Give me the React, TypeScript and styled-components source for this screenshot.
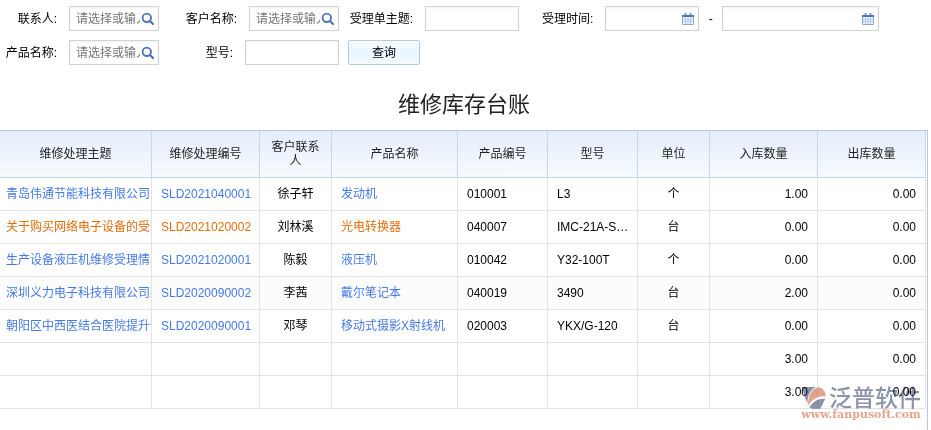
import React, { useId } from "react";
import styled, { createGlobalStyle } from "styled-components";

const GlobalStyle = createGlobalStyle`
  *, *::before, *::after { box-sizing: border-box; }
  body {
    margin: 0;
    background: #fff;
    color: #000;
    font: 12px/14px "Liberation Sans", "Noto Sans CJK SC", sans-serif;
  }
  input, button { font: inherit; color: inherit; }
`;

const Page = styled.main`
  position: relative;
  display: flex;
  flex-direction: column;
  min-height: 100vh;
  padding-right: 3px;
`;

const Filters = styled.form`
  display: grid;
  grid-template-columns: 159px 180px 180px 1fr;
  row-gap: 9px;
  padding: 6px 49px 0 0;
`;

const Field = styled.div<{ $start?: boolean }>`
  display: flex;
  align-items: center;
  justify-content: ${(p) => (p.$start ? "flex-start" : "flex-end")};
  padding-left: ${(p) => (p.$start ? 23 : 0)}px;
`;

const Label = styled.label`
  margin-right: 12px;
  white-space: nowrap;
`;

const Control = styled.div<{ $width?: number }>`
  position: relative;
  height: 25px;
  ${(p) => (p.$width ? `flex: none; width: ${p.$width}px;` : "flex: 1; min-width: 94px;")}
`;

const TextInput = styled.input<{ $icon?: boolean }>`
  display: block;
  width: 100%;
  height: 25px;
  padding: 0 ${(p) => (p.$icon ? 18 : 6)}px 0 6px;
  border: 1px solid #d2d2d2;
  border-radius: 0;
  background: #fff;
  box-shadow: inset 0 1px 3px rgba(0, 0, 0, 0.06);
  outline-color: #86aee0;
  text-overflow: clip;
  &::placeholder { color: #757575; opacity: 1; text-overflow: clip; }
`;

const IconButton = styled.button`
  position: absolute;
  top: 5px;
  right: 3px;
  display: flex;
  align-items: center;
  justify-content: center;
  width: 16px;
  height: 16px;
  padding: 0;
  border: 0;
  background: none;
  cursor: pointer;
`;

const Dash = styled.span`
  width: 23px;
  text-align: center;
`;

const QueryButton = styled.button`
  width: 72px;
  height: 25px;
  margin-left: 9px;
  padding: 0;
  border: 1px solid #b9c9e0;
  border-radius: 2px;
  background: linear-gradient(#f8fcff, #e8f4fe 55%, #f5faff);
  cursor: pointer;
`;

const Title = styled.h1`
  margin: 0;
  padding-top: 15px;
  color: #222;
  font-size: 22px;
  font-weight: 400;
  line-height: 50px;
  text-align: center;
`;

const GridPanel = styled.section`
  flex: 1;
  padding-right: 1px;
  border-top: 1px solid #b8c6e0;
  border-right: 1px solid #bcc6df;
`;

const Table = styled.table`
  width: 100%;
  table-layout: fixed;
  border-collapse: separate;
  border-spacing: 0;
`;

const HeadRow = styled.tr`
  background: linear-gradient(#e4edfb, #f8fbff);
`;

const HeadCell = styled.th`
  height: 47px;
  padding: 0 9px;
  border-right: 1px solid #c5d8eb;
  border-bottom: 1px solid #c0d7ea;
  color: #222;
  font-weight: 400;
`;

const BodyRow = styled.tr<{ $shaded?: boolean }>`
  background: ${(p) => (p.$shaded ? "#fcfcfc" : "#fff")};
`;

type Align = "left" | "center" | "right";

const cellPadding = (align: Align, clip?: boolean) => {
  if (clip) return "0 0 0 6px";
  return align === "left" ? "0 7px 0 9px" : "0 9px";
};

const Cell = styled.td<{ $align?: Align; $clip?: boolean }>`
  height: 33px;
  padding: ${(p) => cellPadding(p.$align ?? "left", p.$clip)};
  border-right: 1px solid #e3e3e3;
  border-bottom: 1px solid #e3e3e3;
  overflow: hidden;
  white-space: nowrap;
  text-overflow: ${(p) => (p.$clip ? "clip" : "ellipsis")};
  text-align: ${(p) => p.$align ?? "left"};
`;

const Link = styled.a<{ $active?: boolean }>`
  color: ${(p) => (p.$active ? "#e36c09" : "#4579e6")};
  text-decoration: none;
`;

const Watermark = styled.div`
  position: absolute;
  right: 10px;
  bottom: 10px;
  width: 120px;
  mix-blend-mode: multiply;
  pointer-events: none;
`;

const Brand = styled.div`
  display: flex;
  align-items: center;
  height: 24px;
  color: #8b93ac;
  font-size: 23px;
  font-weight: 500;
  line-height: 24px;
  white-space: nowrap;
`;

const Site = styled.div`
  color: #e2a58c;
  font: bold 11px/10px "DejaVu Serif", serif;
  text-align: center;
  white-space: nowrap;
`;

const SearchIcon = () => (
  <svg width="14" height="14" viewBox="0 0 14 14" fill="none" stroke="#4f74b8" aria-hidden="true">
    <circle cx="5.8" cy="5.8" r="4.2" strokeWidth="1.9" />
    <path d="M9 9 12 12" strokeWidth="2.3" strokeLinecap="round" />
  </svg>
);

const CalendarIcon = () => (
  <svg width="12" height="12" viewBox="0 0 12 12" aria-hidden="true">
    <path d="M1 4h10v7H1z" fill="#f3f8ff" />
    <path d="M3.5 4v7M6 4v7M8.5 4v7M1 6.3h10M1 8.6h10" stroke="#a9bfe6" strokeWidth="0.8" />
    <path d="M.5 3v8.5h11V3" fill="none" stroke="#8aa6d6" />
    <path d="M0 2h12v2H0z" fill="#4d76b8" />
    <path d="M2.5 0h2v2h-2zM7.5 0h2v2h-2z" fill="#7c9bd0" />
  </svg>
);

const BrandLogo = () => (
  <svg width="28" height="24" viewBox="0 0 80 72" preserveAspectRatio="xMinYMid meet" aria-hidden="true">
    <path d="M2 3H44C28 12 20 28 19 52C12 40 10 24 2 3Z" fill="#8b93ac" />
    <path d="M20 60C22 26 34 5 54 4C68 7 74 20 74 32C54 27 36 38 20 60Z" fill="#e2a58c" />
    <path d="M25 64C36 46 50 37 73 38C68 46 64 58 58 68H34Z" fill="#8b93ac" />
  </svg>
);

type InputFieldProps = { label: string; width: number; lookup?: boolean };

const InputField = ({ label, width, lookup }: InputFieldProps) => {
  const id = useId();
  return (
    <Field>
      <Label htmlFor={id}>{label}:</Label>
      <Control $width={width}>
        <TextInput id={id} type="text" $icon={lookup} placeholder={lookup ? "请选择或输入" : undefined} />
        {lookup && (
          <IconButton type="button" aria-label={`选择${label}`}>
            <SearchIcon />
          </IconButton>
        )}
      </Control>
    </Field>
  );
};

const DateInput = ({ id, name, width }: { id: string; name: string; width?: number }) => (
  <Control $width={width}>
    <TextInput id={id} type="text" $icon aria-label={name} />
    <IconButton type="button" aria-label={`选择${name}`}>
      <CalendarIcon />
    </IconButton>
  </Control>
);

const columns: { title: string; width: number }[] = [
  { title: "维修处理主题", width: 152 },
  { title: "维修处理编号", width: 108 },
  { title: "客户联系人", width: 72 },
  { title: "产品名称", width: 126 },
  { title: "产品编号", width: 90 },
  { title: "型号", width: 90 },
  { title: "单位", width: 72 },
  { title: "入库数量", width: 108 },
  { title: "出库数量", width: 108 },
];

const Col = styled.col<{ $width: number }>`
  width: ${(p) => p.$width}px;
`;

type Item = {
  subject: string;
  code: string;
  contact: string;
  product: string;
  productCode: string;
  model: string;
  unit: string;
  inQty: string;
  outQty: string;
  active?: boolean;
};

const items: Item[] = [
  { subject: "青岛伟通节能科技有限公司的", code: "SLD2021040001", contact: "徐子轩", product: "发动机", productCode: "010001", model: "L3", unit: "个", inQty: "1.00", outQty: "0.00" },
  { subject: "关于购买网络电子设备的受理", code: "SLD2021020002", contact: "刘林溪", product: "光电转换器", productCode: "040007", model: "IMC-21A-S-SC", unit: "台", inQty: "0.00", outQty: "0.00", active: true },
  { subject: "生产设备液压机维修受理情况", code: "SLD2021020001", contact: "陈毅", product: "液压机", productCode: "010042", model: "Y32-100T", unit: "个", inQty: "0.00", outQty: "0.00" },
  { subject: "深圳义力电子科技有限公司某", code: "SLD2020090002", contact: "李茜", product: "戴尔笔记本", productCode: "040019", model: "3490", unit: "台", inQty: "2.00", outQty: "0.00" },
  { subject: "朝阳区中西医结合医院提升信", code: "SLD2020090001", contact: "邓琴", product: "移动式摄影X射线机", productCode: "020003", model: "YKX/G-120", unit: "台", inQty: "0.00", outQty: "0.00" },
];

const totals = [
  { key: "page", inQty: "3.00", outQty: "0.00" },
  { key: "all", inQty: "3.00", outQty: "0.00" },
];

export default function App() {
  return (
    <>
      <GlobalStyle />
      <Page>
        <Filters onSubmit={(e: React.FormEvent) => e.preventDefault()}>
          <InputField label="联系人" width={90} lookup />
          <InputField label="客户名称" width={90} lookup />
          <InputField label="受理单主题" width={94} />
          <Field $start>
            <Label htmlFor="accepted-from">受理时间:</Label>
            <DateInput id="accepted-from" name="受理开始时间" width={94} />
            <Dash>-</Dash>
            <DateInput id="accepted-to" name="受理结束时间" />
          </Field>
          <InputField label="产品名称" width={90} lookup />
          <InputField label="型号" width={94} />
          <QueryButton type="submit">查询</QueryButton>
        </Filters>
        <Title>维修库存台账</Title>
        <GridPanel>
          <Table>
            <colgroup>
              {columns.map((c) => (
                <Col key={c.title} $width={c.width} />
              ))}
            </colgroup>
            <thead>
              <HeadRow>
                {columns.map((c) => (
                  <HeadCell key={c.title} scope="col">{c.title}</HeadCell>
                ))}
              </HeadRow>
            </thead>
            <tbody>
              {items.map((item, i) => (
                <BodyRow key={item.code} $shaded={i === 3}>
                  <Cell $clip><Link href="#" $active={item.active}>{item.subject}</Link></Cell>
                  <Cell><Link href="#" $active={item.active}>{item.code}</Link></Cell>
                  <Cell $align="center">{item.contact}</Cell>
                  <Cell><Link href="#" $active={item.active}>{item.product}</Link></Cell>
                  <Cell>{item.productCode}</Cell>
                  <Cell>{item.model}</Cell>
                  <Cell $align="center">{item.unit}</Cell>
                  <Cell $align="right">{item.inQty}</Cell>
                  <Cell $align="right">{item.outQty}</Cell>
                </BodyRow>
              ))}
              {totals.map((t) => (
                <BodyRow key={t.key}>
                  {columns.slice(0, 7).map((c) => (
                    <Cell key={c.title} />
                  ))}
                  <Cell $align="right">{t.inQty}</Cell>
                  <Cell $align="right">{t.outQty}</Cell>
                </BodyRow>
              ))}
            </tbody>
          </Table>
        </GridPanel>
        <Watermark>
          <Brand>
            <BrandLogo />
            泛普软件
          </Brand>
          <Site>www.fanpusoft.com</Site>
        </Watermark>
      </Page>
    </>
  );
}
